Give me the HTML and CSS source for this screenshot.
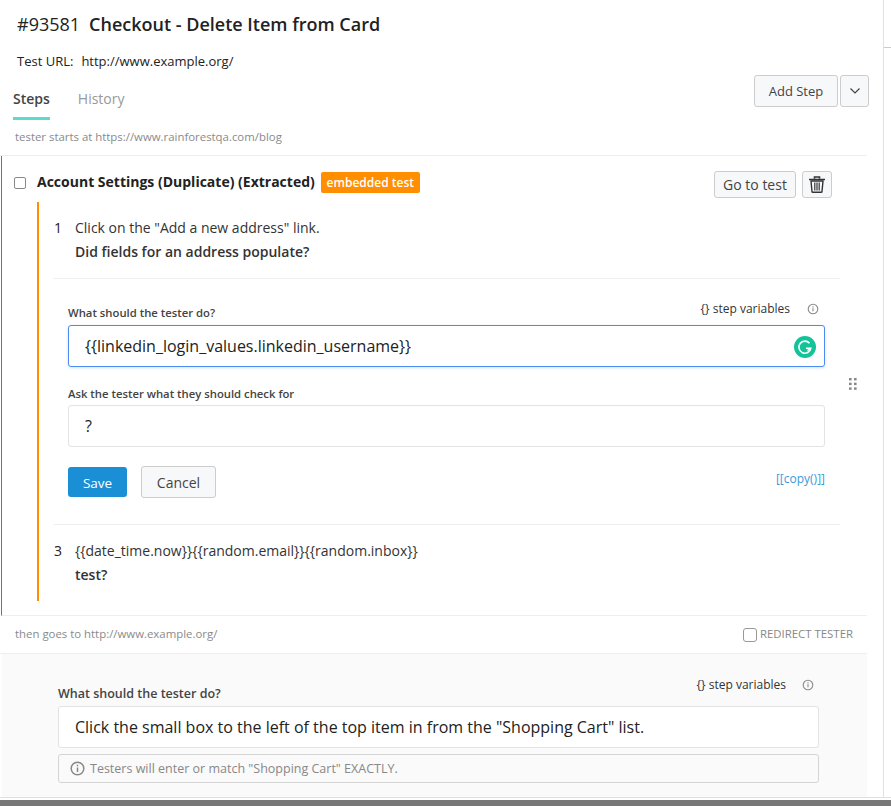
FILE: index.html
```html
<!DOCTYPE html>
<html lang="en">
<head>
<meta charset="utf-8">
<title>Checkout - Delete Item from Card</title>
<link rel="stylesheet" href="styles.css">
</head>
<body>
<div class="page">
  <main class="main">
    <header class="head">
      <h1 class="title"><span class="num">#93581</span><span class="name">Checkout - Delete Item from Card</span></h1>
      <p class="url"><span class="urllabel">Test URL:</span>http://www.example.org/</p>
    </header>
    <div class="tabbar">
      <nav class="tabs">
        <span class="tab active">Steps</span>
        <span class="tab">History</span>
      </nav>
      <div class="addgroup">
        <button class="btn add">Add Step</button>
        <button class="btn chev"><svg width="12" height="8" viewBox="0 0 12 8"><path d="M1.500 1.500 6 6l4.500-4.500" fill="none" stroke="#444" stroke-width="1.200"/></svg></button>
      </div>
    </div>
    <div class="start">tester starts at https://www.rainforestqa.com/blog</div>
    <section class="embedded">
      <div class="embhead">
        <input type="checkbox" class="cb">
        <strong class="embtitle">Account Settings (Duplicate) (Extracted)</strong>
        <span class="badge">embedded test</span>
        <div class="embactions">
          <button class="btn goto">Go to test</button>
          <button class="btn trash"><svg width="18" height="17" viewBox="0 0 18 17"><path d="M6.500 2.500V1h5v1.500M1 3.500h16" fill="none" stroke="#333" stroke-width="1.600"/><path d="M3 5h12l-1 10.500q0 .8-.8.8H4.800q-.8 0-.8-.8z" fill="none" stroke="#333" stroke-width="1.400"/><path d="M6.800 6.500v8M9 6.500v8M11.200 6.500v8" stroke="#333" stroke-width="1.200"/></svg></button>
        </div>
      </div>
      <div class="steps">
        <div class="step first">
          <span class="stepn">1</span>
          <div><div class="act">Click on the "Add a new address" link.</div><div class="chk">Did fields for an address populate?</div></div>
        </div>
        <div class="editor">
          <div class="labelrow">
            <label class="lab">What should the tester do?</label>
            <span class="vars">{} step variables<svg class="info" width="12" height="12" viewBox="0 0 12 12"><circle cx="6" cy="6" r="4.800" fill="none" stroke="#888" stroke-width="1.100"/><path d="M6 5.300v3M6 3.300v1.100" stroke="#888" stroke-width="1.100"/></svg></span>
          </div>
          <div class="field focus">{{linkedin_login_values.linkedin_username}}
            <svg class="gram" width="22" height="22" viewBox="0 0 22 22"><circle cx="11" cy="11" r="11" fill="#15c39a"/><path d="M15.500 7.300a6 6 0 1 0 1.300 5H12" fill="none" stroke="#fff" stroke-width="1.600"/><path d="M13.500 14.500l2.500-2.200" stroke="#fff" stroke-width="1.400"/></svg>
          </div>
          <label class="lab second">Ask the tester what they should check for</label>
          <div class="field">?</div>
          <div class="actions">
            <button class="save">Save</button>
            <button class="btn cancel">Cancel</button>
            <a class="copy">[[copy()]]</a>
          </div>
          <svg class="grip" width="8" height="12" viewBox="0 0 8 12"><g fill="#888"><rect width="2.600" height="2.400"/><rect x="5" width="2.600" height="2.400"/><rect y="4.700" width="2.600" height="2.400"/><rect x="5" y="4.700" width="2.600" height="2.400"/><rect y="9.400" width="2.600" height="2.400"/><rect x="5" y="9.400" width="2.600" height="2.400"/></g></svg>
        </div>
        <div class="step last">
          <span class="stepn">3</span>
          <div><div class="act">{{date_time.now}}{{random.email}}{{random.inbox}}</div><div class="chk">test?</div></div>
        </div>
      </div>
    </section>
    <div class="then">
      <span>then goes to http://www.example.org/</span>
      <label class="redirect"><input type="checkbox" class="cb2">REDIRECT TESTER</label>
    </div>
    <section class="lower">
      <div class="labelrow low">
        <label class="lab big">What should the tester do?</label>
        <span class="vars">{} step variables<svg class="info" width="12" height="12" viewBox="0 0 12 12"><circle cx="6" cy="6" r="4.800" fill="none" stroke="#888" stroke-width="1.100"/><path d="M6 5.300v3M6 3.300v1.100" stroke="#888" stroke-width="1.100"/></svg></span>
      </div>
      <div class="field plain">Click the small box to the left of the top item in from the "Shopping Cart" list.</div>
      <div class="hint"><svg width="15" height="15" viewBox="0 0 15 15"><circle cx="7.500" cy="7.500" r="6.300" fill="none" stroke="#888" stroke-width="1.500"/><path d="M7.500 6.500v4.500M7.500 3.700v1.600" stroke="#888" stroke-width="1.500"/></svg>Testers will enter or match "Shopping Cart" EXACTLY.</div>
    </section>
  </main>
  <aside class="rail"><div class="railtop"></div></aside>
  <div class="bottom"></div>
</div>
</body>
</html>
```
FILE: styles.css
```css
* { box-sizing: border-box; }
html, body { margin: 0; padding: 0; background: #fff; }
body { font-family: "Open Sans", sans-serif; color: #222; overflow: hidden; }
.page { width: 891px; height: 806px; overflow: hidden; display: grid; grid-template-columns: 867px 16px 8px; grid-template-rows: 797px 9px; }
.main { grid-column: 1; grid-row: 1; min-width: 0; }
.rail { grid-column: 3; grid-row: 1 / 2; border-left: 1px solid #e2e2e2; }
.railtop { height: 48px; border-bottom: 1px solid #ccc; }
.bottom { grid-column: 1 / 4; grid-row: 2; border-top: 1px solid #e0e0e0; background: linear-gradient(#fff 2px, #777 2px); }

.head { padding: 12px 0 0 17px; height: 75px; }
.title { margin: 0; font-size: 18px; line-height: 24px; font-weight: 600; color: #222; }
.num { font-weight: 400; margin-right: 9px; }
.url { margin: 15px 0 0; font-size: 13px; line-height: 20px; color: #222; }
.urllabel { margin-right: 8px; }

.tabbar { height: 45px; display: flex; justify-content: space-between; padding-left: 13px; margin-right: -2px; }
.tabs { display: flex; gap: 28px; }
.tab { font-size: 14px; color: #999; padding-top: 15px; line-height: 18px; height: 45px; }
.tab.active { font-weight: 600; color: #444; border-bottom: 3px solid #5bdccb; }
.addgroup { display: flex; gap: 2px; height: 32px; }
.btn { font-family: inherit; background: #f7f8f9; border: 1px solid #ccc; border-radius: 3px; color: #444; padding: 0; }
.add { width: 84px; font-size: 13px; font-weight: 500; }
.chev { width: 29px; display: flex; align-items: center; justify-content: center; }

.start { height: 36px; padding: 9px 0 0 15px; font-size: 11.400px; line-height: 16px; color: #8a8a8a; border-bottom: 1px solid #eee; }
.embedded { margin-left: 1px; border-left: 1px solid #1a8fd1; height: 460px; border-bottom: 1px solid #eee; }
.embhead { height: 46px; display: flex; align-items: flex-start; padding: 16px 35px 0 12px; }
.cb { appearance: none; width: 12px; height: 12px; margin: 5px 11px 0 0; border: 1px solid #888; border-radius: 2px; background: #fff; }
.embtitle { font-size: 14px; line-height: 21px; font-weight: 700; color: #222; margin-top: -1px; }
.badge { margin: 0 0 0 6px; height: 21px; width: 99px; text-align: center; background: #ff8f00; color: #fff; font-size: 12px; line-height: 21px; font-weight: 600; border-radius: 2px; }
.embactions { margin: -1px 0 0 auto; display: flex; gap: 6px; }
.goto { width: 82px; height: 27px; font-size: 14px; font-weight: 400; }
.trash { width: 30px; height: 27px; display: flex; align-items: center; justify-content: center; }

.steps { margin-left: 35px; margin-right: 27px; border-left: 2px solid #ff8f00; height: 399px; }
.step { display: flex; margin-left: 15px; font-size: 14px; line-height: 24px; }
.stepn { width: 21px; }
.act { color: #333; }
.chk { font-weight: 600; color: #333; font-size: 14px; }
.first { padding-top: 14px; height: 76px; }
.last { padding-top: 14px; }
.editor { margin-left: 15px; border-top: 1px solid #eee; border-bottom: 1px solid #eee; height: 247px; padding: 0 15px 0 14px; position: relative; }
.labelrow { display: flex; justify-content: space-between; align-items: flex-end; height: 46px; padding-bottom: 4px; }
.lab { font-size: 11.300px; line-height: 16px; font-weight: 600; color: #444; display: block; }
.vars { font-size: 12px; line-height: 16px; color: #333; display: flex; align-items: center; transform: translateY(-4px); }
.info { margin-left: 17px; margin-right: 6px; }
.field { height: 42px; border: 1px solid #e3e3e3; border-radius: 3px; background: #fff; padding: 0 16px; font-size: 16px; line-height: 40px; color: #222; position: relative; }
.field.focus { border-color: #4a8cf0; box-shadow: 0 1px 3px rgba(74,140,240,.25); }
.gram { position: absolute; right: 8px; top: 10px; }
.second { margin-top: 19px; margin-bottom: 3px; }
.actions { display: flex; align-items: center; margin-top: 19px; height: 32px; }
.save { width: 59px; height: 30px; background: #1a8fd6; color: #fff; border: 0; border-radius: 3px; font-family: inherit; font-size: 13.500px; font-weight: 500; padding-top: 2px; }
.cancel { width: 75px; height: 32px; margin-left: 14px; font-size: 14px; font-weight: 500; }
.copy { margin-left: auto; font-size: 12px; color: #3d9ad6; transform: translateY(-4px); }
.grip { position: absolute; right: -17px; top: 99px; }

.then { height: 38px; display: flex; justify-content: space-between; align-items: center; padding: 0 14px 2px 15px; font-size: 11.400px; color: #8a8a8a; border-bottom: 1px solid #eee; }
.redirect { display: flex; align-items: center; font-size: 11.400px; color: #888; }
.cb2 { appearance: none; width: 14px; height: 14px; margin: 2px 3px 0 0; border: 1px solid #999; border-radius: 3px; background: #fff; }

.lower { margin-left: 2px; height: 144px; background: #fafafa; padding: 0 48px 0 56px; }
.low { height: 52px; padding-bottom: 4px; }
.low .vars { transform: translateY(-9px); }
.low .info { margin-left: 16px; margin-right: 5px; }
.big { font-size: 12.500px; font-weight: 600; }
.plain { height: 42px; }
.hint { height: 29px; margin-top: 6px; border: 1px solid #d4d4d4; border-radius: 3px; display: flex; align-items: center; padding-left: 11px; font-size: 12.500px; color: #888; gap: 5px; }
```
